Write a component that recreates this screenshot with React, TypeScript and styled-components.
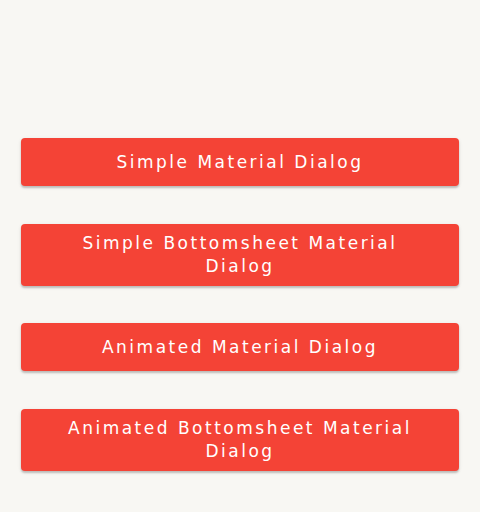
import React from "react";
import styled, { createGlobalStyle } from "styled-components";

const Global = createGlobalStyle`
  html, body { margin: 0; padding: 0; background: #f8f7f3; }
  body { font-family: "DejaVu Sans", "Liberation Sans", sans-serif; }
`;

const Page = styled.div`
  width: 480px;
  height: 512px;
  box-sizing: border-box;
  padding: 138px 21px 0;
  display: flex;
  flex-direction: column;
  gap: 37.5px;
`;

const Button = styled.button`
  min-height: 48px;
  width: 100%;
  box-sizing: border-box;
  padding: 8px 36px;
  border: none;
  border-radius: 4px;
  background: #f44336;
  color: #ffffff;
  font-family: "DejaVu Sans", sans-serif;
  font-size: 17px;
  line-height: 23px;
  letter-spacing: 2.5px;
  text-align: center;
  box-shadow: 0 2px 2px rgba(0, 0, 0, 0.2), 0 1px 4px rgba(0, 0, 0, 0.08);
  cursor: pointer;
`;

const labels = [
  "Simple Material Dialog",
  "Simple Bottomsheet Material Dialog",
  "Animated Material Dialog",
  "Animated Bottomsheet Material Dialog",
];

export default function App() {
  return (
    <>
      <Global />
      <Page>
        {labels.map((l) => (
          <Button key={l}>{l}</Button>
        ))}
      </Page>
    </>
  );
}
